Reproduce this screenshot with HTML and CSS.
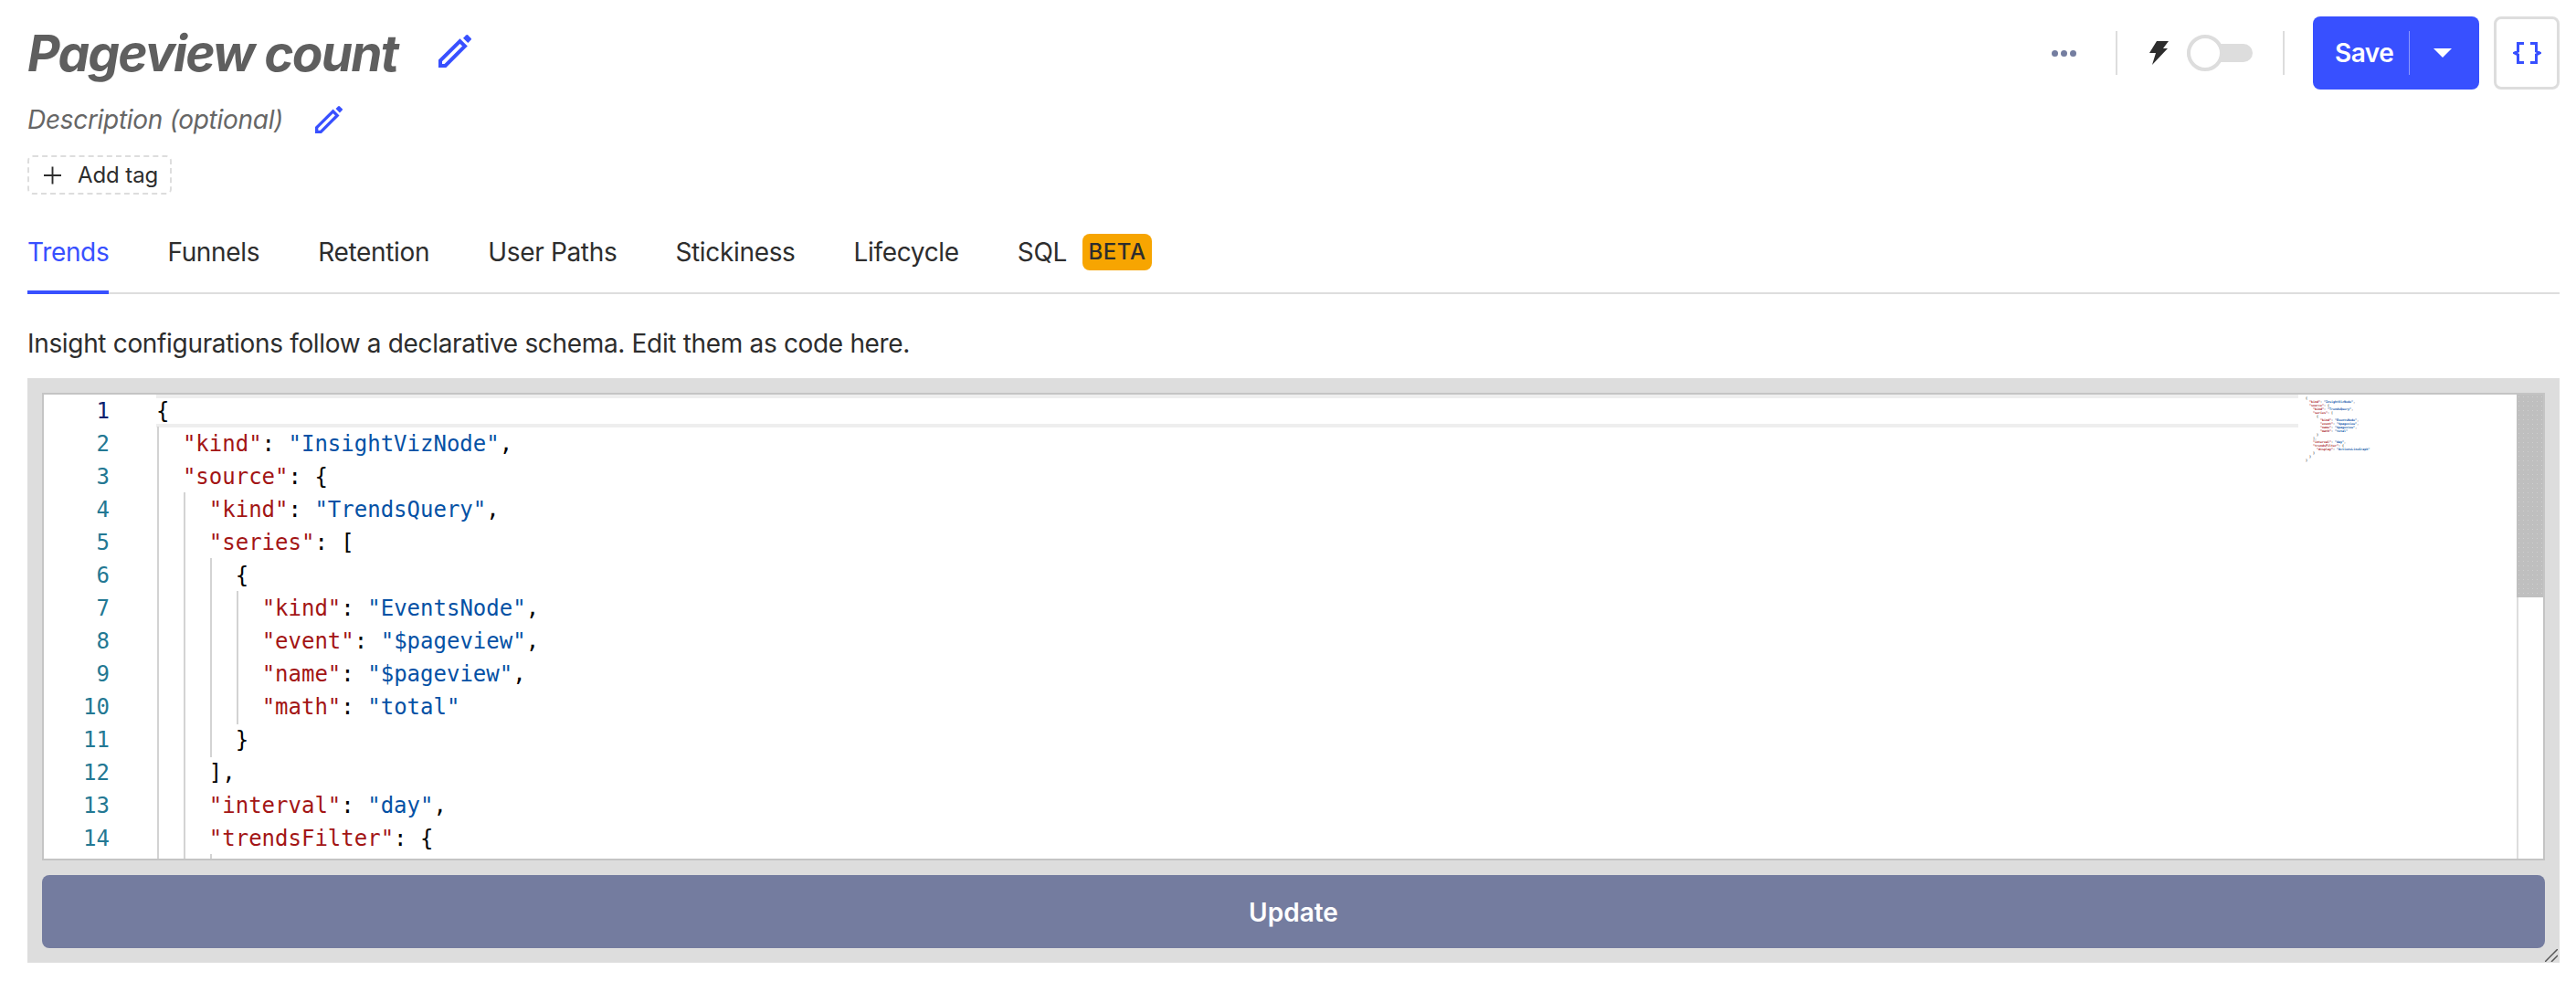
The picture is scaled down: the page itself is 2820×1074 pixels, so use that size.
FILE: index.html
```html
<!DOCTYPE html>
<html lang="en">
<head>
<meta charset="utf-8">
<title>Pageview count</title>
<link rel="stylesheet" href="styles.css">
</head>
<body>
<main class="page">
  <header class="header">
    <div class="meta">
      <div class="title-row">
        <h1 class="title">Pageview count</h1>
        <svg class="pencil pencil-lg" viewBox="0 0 36 36"><path class="pencil-body" d="M2 34v-5.600L23.500 7l5.500 5.500L7.500 34z"/><path class="pencil-cap" d="M27 3.700 30.200.5a1.500 1.500 0 0 1 2.100 0l3.200 3.200a1.500 1.500 0 0 1 0 2.100L32.300 9z"/></svg>
      </div>
      <div class="desc-row">
        <span class="desc">Description (optional)</span>
        <svg class="pencil pencil-sm" viewBox="0 0 36 36"><path class="pencil-body" d="M2 34v-5.600L23.500 7l5.500 5.500L7.500 34z"/><path class="pencil-cap" d="M27 3.700 30.200.5a1.500 1.500 0 0 1 2.100 0l3.200 3.200a1.500 1.500 0 0 1 0 2.100L32.300 9z"/></svg>
      </div>
      <button class="tag-btn"><svg class="plus" viewBox="0 0 20 20"><path d="M10 0v20M0 10h20"/></svg>Add tag</button>
    </div>
    <div class="actions">
      <div class="dots"><i></i><i></i><i></i></div>
      <span class="vr"></span>
      <svg class="bolt" viewBox="0 0 21 26"><path d="M8 0h13l-6 8h5L3 26l4-13H0z"/></svg>
      <div class="toggle"><span class="knob"></span></div>
      <span class="vr"></span>
      <div class="save">
        <span class="save-label">Save</span>
        <span class="save-div"></span>
        <span class="caret"></span>
      </div>
      <button class="code-btn"><svg class="braces" viewBox="0 0 31 24"><path d="M12 1.500H5.500V10L1.800 12l3.700 2v8.500H12M19 1.500h6.500V10l3.700 2-3.700 2v8.500H19"/></svg></button>
    </div>
  </header>

  <nav class="tabs">
    <span class="tab active">Trends</span>
    <span class="tab">Funnels</span>
    <span class="tab">Retention</span>
    <span class="tab">User Paths</span>
    <span class="tab">Stickiness</span>
    <span class="tab">Lifecycle</span>
    <span class="tab">SQL<b class="beta">BETA</b></span>
  </nav>

  <p class="help">Insight configurations follow a declarative schema. Edit them as code here.</p>

  <section class="panel">
    <div class="editor">
      <div class="gutter">
        <div class="ln cur">1</div><div class="ln">2</div><div class="ln">3</div><div class="ln">4</div><div class="ln">5</div><div class="ln">6</div><div class="ln">7</div><div class="ln">8</div><div class="ln">9</div><div class="ln">10</div><div class="ln">11</div><div class="ln">12</div><div class="ln">13</div><div class="ln">14</div>
      </div>
      <div class="code">
        <div class="line curline">{</div>
        <div class="line"><i class="g"></i>  <span class="k">"kind"</span>: <span class="s">"InsightVizNode"</span>,</div>
        <div class="line"><i class="g"></i>  <span class="k">"source"</span>: {</div>
        <div class="line"><i class="g"></i>  <i class="g"></i>  <span class="k">"kind"</span>: <span class="s">"TrendsQuery"</span>,</div>
        <div class="line"><i class="g"></i>  <i class="g"></i>  <span class="k">"series"</span>: [</div>
        <div class="line"><i class="g"></i>  <i class="g"></i>  <i class="g"></i>  {</div>
        <div class="line"><i class="g"></i>  <i class="g"></i>  <i class="g"></i>  <i class="g"></i>  <span class="k">"kind"</span>: <span class="s">"EventsNode"</span>,</div>
        <div class="line"><i class="g"></i>  <i class="g"></i>  <i class="g"></i>  <i class="g"></i>  <span class="k">"event"</span>: <span class="s">"$pageview"</span>,</div>
        <div class="line"><i class="g"></i>  <i class="g"></i>  <i class="g"></i>  <i class="g"></i>  <span class="k">"name"</span>: <span class="s">"$pageview"</span>,</div>
        <div class="line"><i class="g"></i>  <i class="g"></i>  <i class="g"></i>  <i class="g"></i>  <span class="k">"math"</span>: <span class="s">"total"</span></div>
        <div class="line"><i class="g"></i>  <i class="g"></i>  <i class="g"></i>  }</div>
        <div class="line"><i class="g"></i>  <i class="g"></i>  ],</div>
        <div class="line"><i class="g"></i>  <i class="g"></i>  <span class="k">"interval"</span>: <span class="s">"day"</span>,</div>
        <div class="line"><i class="g"></i>  <i class="g"></i>  <span class="k">"trendsFilter"</span>: {</div>
        <div class="line"><i class="g"></i>  <i class="g"></i>  <i class="g"></i></div>
      </div>
      <div class="minimap">
<span>{</span>
<span>  <span class="k">"kind"</span>: <span class="s">"InsightVizNode"</span>,</span>
<span>  <span class="k">"source"</span>: {</span>
<span>    <span class="k">"kind"</span>: <span class="s">"TrendsQuery"</span>,</span>
<span>    <span class="k">"series"</span>: [</span>
<span>      {</span>
<span>        <span class="k">"kind"</span>: <span class="s">"EventsNode"</span>,</span>
<span>        <span class="k">"event"</span>: <span class="s">"$pageview"</span>,</span>
<span>        <span class="k">"name"</span>: <span class="s">"$pageview"</span>,</span>
<span>        <span class="k">"math"</span>: <span class="s">"total"</span></span>
<span>      }</span>
<span>    ],</span>
<span>    <span class="k">"interval"</span>: <span class="s">"day"</span>,</span>
<span>    <span class="k">"trendsFilter"</span>: {</span>
<span>      <span class="k">"display"</span>: <span class="s">"ActionsLineGraph"</span></span>
<span>    }</span>
<span>  }</span>
<span>}</span>
      </div>
      <div class="scroll"><div class="thumb"></div></div>
    </div>
    <button class="update">Update</button>
    <svg class="grip" viewBox="0 0 14 14"><path d="M0 14 14 0M7 14l7-7"/></svg>
  </section>
</main>
</body>
</html>
```
FILE: styles.css
```css
* { box-sizing: border-box; }
html, body { margin: 0; background: #fff; }
body { font-family: Inter, "Liberation Sans", sans-serif; color: #2d2d2d; }
button { font-family: inherit; }
.page { padding: 18px 18px 20px 30px; }

.header { display: flex; justify-content: space-between; align-items: flex-start; }
.meta { display: flex; flex-direction: column; align-items: flex-start; }
.title-row { display: flex; align-items: center; height: 80px; }
.title { margin: 0; font-size: 55px; line-height: 80px; font-weight: 700; font-style: italic; color: #5f5f5f; letter-spacing: -1.8px; }
.pencil { display: block; }
.pencil-lg { width: 36px; height: 36px; margin-left: 45px; margin-top: -4px; }
.pencil-sm { width: 30px; height: 30px; margin-left: 35px; }
.pencil-body { fill: none; stroke: #3850ff; stroke-width: 4; }
.pencil-cap { fill: #3850ff; }
.desc-row { display: flex; align-items: center; height: 50px; margin-top: 8px; }
.desc { font-size: 28px; font-style: italic; color: #666; line-height: 50px; letter-spacing: -0.3px; }
.tag-btn { display: flex; align-items: center; height: 43px; margin-top: 14px; padding: 0 13px 0 16px; background: #fff; border: 2px dashed #ddd; border-radius: 6px; font-size: 24px; letter-spacing: -0.1px; color: #2d2d2d; }
.plus { width: 19px; height: 20px; margin-right: 18px; fill: none; stroke: #2d2d2d; stroke-width: 2; }

.actions { display: flex; align-items: center; height: 80px; }
.dots { display: flex; gap: 3px; margin-right: 43px; }
.dots i { width: 7px; height: 7px; border-radius: 50%; background: #747ea0; }
.vr { width: 2px; height: 48px; background: #ddd; }
.bolt { width: 21px; height: 26px; margin-left: 35px; fill: #2d2d2d; }
.toggle { position: relative; width: 72px; height: 20px; margin: 0 33px 0 20px; background: #ddd; border-radius: 10px; }
.knob { position: absolute; left: 0; top: -10px; width: 40px; height: 40px; border: 4px solid #ddd; border-radius: 50%; background: #fff; }
.save { display: flex; align-items: center; width: 182px; height: 80px; margin-left: 31px; padding-left: 24px; background: #3850ff; border-radius: 8px; color: #fff; }
.save-label { font-size: 28px; font-weight: 600; width: 81px; letter-spacing: -0.5px; }
.save-div { width: 1px; height: 48px; background: #8c99ff; }
.caret { width: 0; height: 0; margin-left: 26px; border-left: 10px solid transparent; border-right: 10px solid transparent; border-top: 10px solid #fff; }
.code-btn { display: flex; align-items: center; justify-content: center; width: 72px; height: 80px; margin-left: 16px; padding: 0; background: #fff; border: 3px solid #ddd; border-radius: 8px; }
.braces { width: 31px; height: 24px; fill: none; stroke: #3850ff; stroke-width: 3; }

.tabs { display: flex; gap: 64px; height: 82px; margin-top: 27px; border-bottom: 2px solid #ddd; font-size: 28px; letter-spacing: -0.33px; align-items: flex-start; }
.tab { display: flex; align-items: center; height: 82px; padding-bottom: 10px; line-height: 40px; }
.tab.active { color: #3850ff; border-bottom: 4px solid #3850ff; padding-bottom: 6px; }
.beta { display: inline-flex; align-items: center; justify-content: center; width: 76px; height: 40px; margin-left: 17px; background: #f7a501; border-radius: 8px; font-size: 24px; font-weight: 500; letter-spacing: 0.6px; }

.help { margin: 0; height: 92px; padding-top: 34px; font-size: 28px; line-height: 40px; letter-spacing: -0.33px; }

.panel { position: relative; padding: 16px; background: #ddd; }
.editor { position: relative; display: flex; height: 512px; background: #fff; border: 2px solid #c4c4c4; overflow: hidden; }
.gutter { flex: none; width: 123px; padding-right: 51px; font: 24px/36px "DejaVu Sans Mono", monospace; color: #237893; text-align: right; }
.ln { height: 36px; }
.ln.cur { color: #0b216f; }
.code { flex: none; width: 2345px; font: 24px/36px "DejaVu Sans Mono", monospace; color: #000; }
.line { position: relative; height: 36px; white-space: pre; }
.line .g { display: inline-block; width: 0; height: 36px; vertical-align: top; box-shadow: 2px 0 0 1px #d3d3d3; }
.curline { border-top: 4px solid #eee; border-bottom: 4px solid #eee; line-height: 28px; }
.k { color: #a31515; }
.s { color: #0451a5; }
.minimap { position: absolute; left: 2476px; top: 2px; display: flex; flex-direction: column; font: 700 3.34px/4px "DejaVu Sans Mono", monospace; color: #333; white-space: pre; }
.minimap > span { display: block; height: 4px; }
.scroll { position: absolute; right: 0; top: 0; bottom: 0; width: 29px; border-left: 2px solid #ddd; }
.thumb { height: 222px; width: 29px; margin-left: -2px; background: #bfbfbf radial-gradient(#cfcfcf 0.8px, transparent 1px) 0 0 / 5px 5px; }

.update { display: block; width: 100%; height: 80px; margin-top: 16px; padding-top: 2px; border: 0; border-radius: 8px; background: #747c9f; color: #fff; font-size: 28px; font-weight: 600; }
.grip { position: absolute; right: 2px; bottom: 1px; width: 14px; height: 14px; fill: none; stroke: #555; stroke-width: 1.5; }
```
